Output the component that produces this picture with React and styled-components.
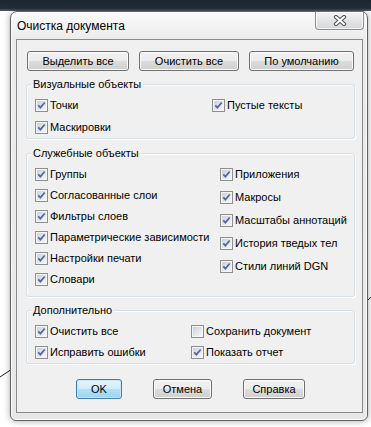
import React from "react";
import styled, { createGlobalStyle } from "styled-components";

const GlobalStyle = createGlobalStyle`
  html, body { margin: 0; padding: 0; background: #fff; }
  body {
    font-family: "Liberation Sans", Arial, sans-serif;
    font-size: 11px;
    color: #000;
  }
`;

const Desktop = styled.div`
  position: relative;
  width: 371px;
  height: 427px;
  overflow: hidden;
  background: #fff;
`;

const Drawing = styled.svg`
  position: absolute;
  left: 0;
  top: 0;
  width: 371px;
  height: 427px;
`;

const TopBand = styled.div`
  position: relative;
  height: 11px;
  background: linear-gradient(#1c2631, #232d38 75%, #59606a);
`;

const Window = styled.div`
  position: relative;
  box-sizing: border-box;
  width: 358px;
  height: 410px;
  margin-left: 10px;
  padding: 0 4px 7px 5px;
  display: flex;
  flex-direction: column;
  border: 1px solid #5d6166;
  border-radius: 7px 7px 6px 6px;
  background: linear-gradient(#fafafa, #ececec 28px, #e7e7e8);
  box-shadow: 0 0 7px rgba(0, 0, 0, 0.35), inset 0 0 0 1px rgba(255, 255, 255, 0.85);
`;

const TitleBar = styled.div`
  height: 27px;
  display: flex;
  align-items: center;
  justify-content: space-between;
  padding-left: 1px;
`;

const Title = styled.span`
  font-size: 12px;
  line-height: 14px;
  margin-top: 1px;
`;

const CloseButton = styled.div`
  align-self: flex-start;
  box-sizing: border-box;
  width: 49px;
  height: 19px;
  margin-top: -1px;
  margin-right: -1px;
  display: flex;
  align-items: center;
  justify-content: center;
  border: 1px solid #8c9096;
  border-top-color: #6c7076;
  border-radius: 0 0 4px 4px;
  background: linear-gradient(#f4f4f5, #e3e4e6 50%, #d6d7da);
  box-shadow: inset 0 0 0 1px rgba(255, 255, 255, 0.7);
`;

const Client = styled.div`
  box-sizing: border-box;
  height: 374px;
  padding: 11px 7px 13px 9px;
  display: flex;
  flex-direction: column;
  border: 1px solid #8a8a8a;
  background: #f0f0f0;
`;

const ButtonRow = styled.div`
  display: flex;
  gap: ${(p) => p.gap}px;
  justify-content: ${(p) => (p.center ? "center" : "flex-start")};
  padding: 0 1px;
  margin-top: ${(p) => p.top || 0}px;
`;

const Button = styled.div`
  box-sizing: border-box;
  width: ${(p) => p.w}px;
  height: 20px;
  display: flex;
  align-items: center;
  justify-content: center;
  border: 1px solid ${(p) => (p.primary ? "#3c7fb1" : "#707070")};
  border-radius: 3px;
  background: ${(p) =>
    p.primary
      ? "linear-gradient(#e5f4fc, #d2ecfb 50%, #b3e0f9 50%, #9dd5f3)"
      : "linear-gradient(#f2f2f2, #ebebeb 50%, #dddddd 50%, #cfcfcf)"};
  box-shadow: inset 0 0 0 1px ${(p) => (p.primary ? "#c6e6f7" : "#fcfcfc")};
  line-height: 13px;
`;

const Group = styled.div`
  margin-top: ${(p) => p.top}px;
  padding: 0 8px ${(p) => p.bottom}px 8px;
  border: 1px solid #d5dfe5;
  border-radius: 3px;
  box-shadow: inset 1px 1px 0 #fff, 1px 1px 0 #fff;
`;

const Legend = styled.div`
  width: fit-content;
  height: 13px;
  margin: -7px 0 ${(p) => p.gap}px -4px;
  padding: 0 2px;
  line-height: 13px;
  background: #f0f0f0;
`;

const Columns = styled.div`
  display: grid;
  grid-template-columns: ${(p) => p.split}px 1fr;
`;

const Column = styled.div`
  display: flex;
  flex-direction: column;
  gap: ${(p) => p.gap || 0}px;
`;

const Row = styled.div`
  height: ${(p) => p.h}px;
  display: flex;
  align-items: center;
  gap: 2px;
  white-space: nowrap;
`;

const Label = styled.span`
  line-height: 13px;
`;

const CheckBox = ({ checked }) => (
  <svg width="13" height="13" viewBox="0 0 13 13">
    <defs>
      <linearGradient id="cbFill" x1="0" y1="0" x2="1" y2="1">
        <stop offset="0" stopColor="#cdd1d8" />
        <stop offset="1" stopColor="#f6f7f8" />
      </linearGradient>
    </defs>
    <rect x="0.5" y="0.5" width="12" height="12" fill="#f4f4f4" stroke="#8e8f8f" />
    <rect x="2" y="2" width="9" height="9" fill="url(#cbFill)" />
    {checked && (
      <path
        d="M3.3 6.4 L5.4 8.6 L9.7 3.5"
        fill="none"
        stroke="#5469a0"
        strokeWidth="1.8"
        strokeLinejoin="miter"
      />
    )}
  </svg>
);

const Check = ({ h, checked = true, children }) => (
  <Row h={h}>
    <CheckBox checked={checked} />
    <Label>{children}</Label>
  </Row>
);

const CloseGlyph = () => (
  <svg width="14" height="11" viewBox="0 0 14 11">
    <path d="M3 2 L11 9 M11 2 L3 9" stroke="#51565c" strokeWidth="4.2" strokeLinecap="round" />
    <path d="M3 2 L11 9 M11 2 L3 9" stroke="#fff" strokeWidth="2" strokeLinecap="round" />
  </svg>
);

export default function App() {
  return (
    <Desktop>
      <GlobalStyle />
      <Drawing viewBox="0 0 371 427">
        <path d="M0 377 L12 369" stroke="#222" strokeWidth="1" fill="none" />
        <path d="M367 301 L371 297" stroke="#222" strokeWidth="1" fill="none" />
      </Drawing>
      <TopBand />
      <Window>
        <TitleBar>
          <Title>Очистка документа</Title>
          <CloseButton>
            <CloseGlyph />
          </CloseButton>
        </TitleBar>
        <Client>
          <ButtonRow gap={10}>
            <Button w={102}>Выделить все</Button>
            <Button w={100}>Очистить все</Button>
            <Button w={105}>По умолчанию</Button>
          </ButtonRow>

          <Group top={13} bottom={0}>
            <Legend gap={3}>Визуальные объекты</Legend>
            <Columns split={177}>
              <Column>
                <Check h={22}>Точки</Check>
                <Check h={22}>Маскировки</Check>
              </Column>
              <Column>
                <Check h={22}>Пустые тексты</Check>
              </Column>
            </Columns>
          </Group>

          <Group top={14} bottom={6}>
            <Legend gap={4}>Служебные объекты</Legend>
            <Columns split={185}>
              <Column>
                <Check h={21}>Группы</Check>
                <Check h={21}>Согласованные слои</Check>
                <Check h={21}>Фильтры слоев</Check>
                <Check h={21}>Параметрические зависимости</Check>
                <Check h={21}>Настройки печати</Check>
                <Check h={21}>Словари</Check>
              </Column>
              <Column gap={2}>
                <Check h={21}>Приложения</Check>
                <Check h={21}>Макросы</Check>
                <Check h={21}>Масштабы аннотаций</Check>
                <Check h={21}>История тведых тел</Check>
                <Check h={21}>Стили линий DGN</Check>
              </Column>
            </Columns>
          </Group>

          <Group top={13} bottom={0}>
            <Legend gap={4}>Дополнительно</Legend>
            <Columns split={156}>
              <Column>
                <Check h={21}>Очистить все</Check>
                <Check h={21}>Исправить ошибки</Check>
              </Column>
              <Column>
                <Check h={21} checked={false}>
                  Сохранить документ
                </Check>
                <Check h={21}>Показать отчет</Check>
              </Column>
            </Columns>
          </Group>

          <ButtonRow gap={31} center top={15}>
            <Button w={46} primary>
              OK
            </Button>
            <Button w={59}>Отмена</Button>
            <Button w={62}>Справка</Button>
          </ButtonRow>
        </Client>
      </Window>
    </Desktop>
  );
}
